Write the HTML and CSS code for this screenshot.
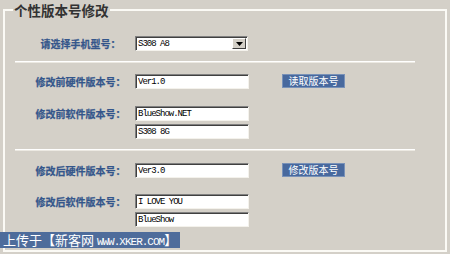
FILE: index.html
```html
<!DOCTYPE html>
<html lang="zh-CN">
<head>
    <meta charset="UTF-8">
    <title>个性版本号修改</title>
    <link rel="stylesheet" href="styles.css">
</head>
<body>
    <fieldset class="panel">
        <legend class="panel-title">个性版本号修改</legend>

        <div class="field field-first">
            <label class="field-label">请选择手机型号：</label>
            <div class="combo">
                <span class="combo-text">S308 A8</span>
                <span class="combo-btn">
                    <svg width="7" height="4" viewBox="0 0 7 4"><path d="M0 0H7L3.5 4Z" fill="#000"/></svg>
                </span>
            </div>
        </div>

        <hr class="sep">

        <div class="group">
            <div class="field">
                <label class="field-label">修改前硬件版本号：</label>
                <div class="inputs">
                    <input class="box" type="text" value="Ver1.0">
                </div>
                <button class="act">读取版本号</button>
            </div>
            <div class="field">
                <label class="field-label">修改前软件版本号：</label>
                <div class="inputs">
                    <input class="box" type="text" value="BlueShow.NET">
                    <input class="box" type="text" value="S308 8G">
                </div>
            </div>
        </div>

        <hr class="sep">

        <div class="group group-last">
            <div class="field">
                <label class="field-label">修改后硬件版本号：</label>
                <div class="inputs">
                    <input class="box" type="text" value="Ver3.0">
                </div>
                <button class="act">修改版本号</button>
            </div>
            <div class="field">
                <label class="field-label">修改后软件版本号：</label>
                <div class="inputs">
                    <input class="box" type="text" value="I LOVE YOU">
                    <input class="box" type="text" value="BlueShow">
                </div>
            </div>
        </div>
    </fieldset>

    <div class="stamp">上传于【新客网 <span class="stamp-en">WWW.XKER.COM</span>】</div>
</body>
</html>
```

FILE: styles.css
```css
*{
    margin: 0;
    padding: 0;
    box-sizing: border-box;
}
body {
    width: 450px;
    height: 254px;
    position: relative;
    overflow: hidden;
    background-color: #d4d0c8;
    font-family: "Noto Sans CJK SC", "Liberation Sans", sans-serif;
}
.panel{
    margin: 2px 3px 0 3px;
    height: 250px;
    border: 2px solid #fbfaf5;
    padding: 0;
}
.panel-title{
    margin-left: 8px;
    padding: 0 1px;
    font-size: 13.5px;
    line-height: 16px;
    font-weight: bold;
    color: #333;
}
.field{
    display: grid;
    grid-template-columns: 101px 114px auto;
    column-gap: 4px;
    align-items: start;
    padding-left: 25px;
}
.field-first{
    margin-top: 18px;
}
.field-label{
    text-align: center;
    font-size: 10px;
    line-height: 15px;
    font-weight: bold;
    -webkit-text-stroke: 0.25px #34568b;
    color: #34568b;
    white-space: nowrap;
}
.inputs{
    display: flex;
    flex-direction: column;
    row-gap: 3px;
}
.box, .combo{
    width: 114px;
    height: 15px;
    background-color: #fff;
    border: 1px solid;
    border-color: #808080 #f4f2ec #f4f2ec #808080;
    box-shadow: inset 1px 1px 0 #404040;
    font-family: "Liberation Mono", monospace;
    font-size: 9px;
    letter-spacing: -1px;
    color: #000;
    padding: 0 2px;
    outline: none;
}
.combo{
    width: 113px;
    display: flex;
    align-items: center;
    justify-content: space-between;
    padding: 1px 1px 1px 2px;
}
.combo-btn{
    width: 14px;
    height: 11px;
    display: flex;
    align-items: center;
    justify-content: center;
    background-color: #d4d0c8;
    border: 1px solid;
    border-color: #fff #404040 #404040 #fff;
}
.sep{
    border: 0;
    border-top: 1px solid #fff;
    border-bottom: 1px solid #ece9e2;
    margin: 10px 30px 0 10px;
}
.group{
    display: flex;
    flex-direction: column;
    row-gap: 17px;
    margin-top: 11px;
}
.group-last{
    margin-top: 12px;
    row-gap: 16px;
}
.act{
    margin-left: 29px;
    width: 63px;
    height: 14px;
    border: 1px solid #7891b8;
    background-color: #48699e;
    color: #fff;
    font-family: "Noto Sans CJK SC", sans-serif;
    font-size: 10px;
    line-height: 12px;
}
.stamp{
    position: absolute;
    left: 0;
    top: 232px;
    height: 16px;
    padding: 0 3px;
    background-color: #4e6c9b;
    color: #fff;
    font-size: 13px;
    line-height: 16px;
    white-space: nowrap;
}
.stamp-en{
    font-family: "Liberation Mono", monospace;
    font-size: 11px;
    letter-spacing: -1px;
}
```
